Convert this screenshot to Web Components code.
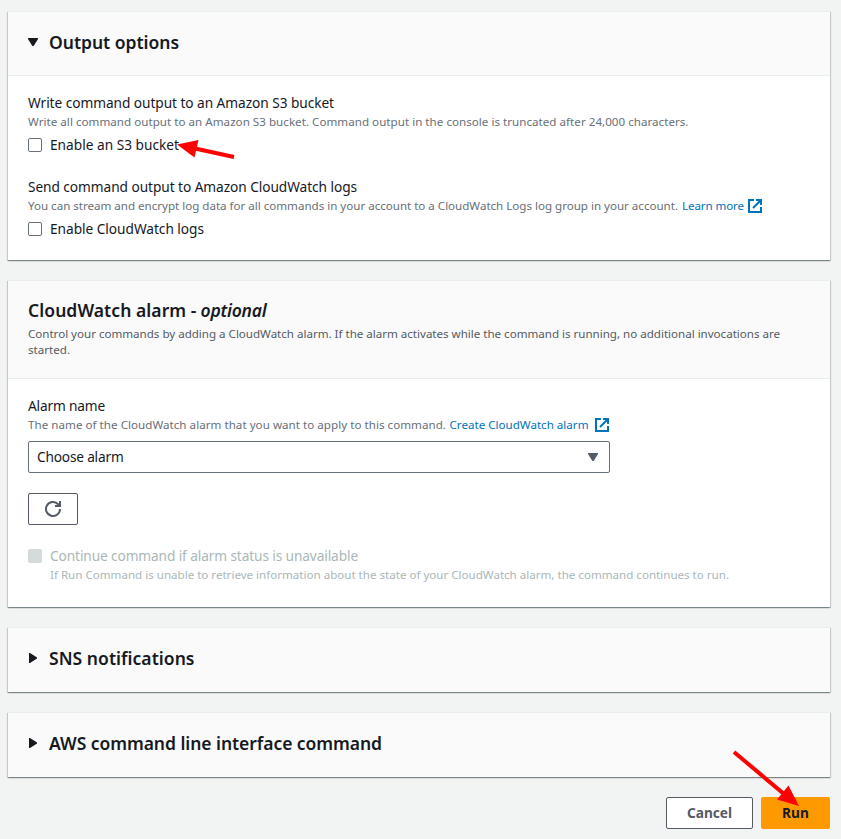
<!DOCTYPE html>
<html lang="en">
<head>
<meta charset="utf-8">
<title>Run command</title>
<style>
  html, body { margin: 0; background: #f2f3f3; }
  body { height: 839px; overflow: hidden; color: #16191f; font: 13.7px/22px "Noto Sans", "Open Sans", sans-serif; }
</style>
</head>
<body>
<run-command-page></run-command-page>
<script>
const define = (name, html, setup) => {
  const template = document.createElement('template');
  template.innerHTML = html;
  customElements.define(name, class extends HTMLElement {
    connectedCallback() {
      if (this.shadowRoot) return;
      this.attachShadow({ mode: 'open' }).append(template.content.cloneNode(true));
      if (setup) setup(this, this.shadowRoot);
    }
  });
};

// Text run tracked so that it takes the width given in its "w" attribute.
define('fit-text', `
  <style>:host { display: inline-block; white-space: nowrap; }</style><slot></slot>`,
  host => {
    const target = +host.getAttribute('w');
    const natural = host.getBoundingClientRect().width;
    host.style.letterSpacing = ((target - natural) / host.textContent.length).toFixed(4) + 'px';
  });

define('ui-caret', `
  <style>
    :host { display: block; width: 10px; height: 10px; }
    svg { display: block; fill: currentColor; }
    :host([right]) .down, :host(:not([right])) .right { display: none; }
  </style>
  <svg class="down" width="10" height="10"><path d="M0 1h10v1L5.6 9H4.4L0 2z"/></svg>
  <svg class="right" width="10" height="10"><path d="M1 0h1l7 4.4v1.2L2 10H1z"/></svg>`);

define('ui-external', `
  <style>:host { display: block; width: 14px; height: 14px; color: #0073bb; } svg { display: block; }</style>
  <svg width="14" height="14" fill="none" stroke="currentColor" stroke-width="2">
    <path d="M6 1H1v12h12V8M8 1h5v5M13 1L5 9"/></svg>`);

define('ui-panel', `
  <style>
    :host { display: block; background: #fff; box-sizing: border-box;
      box-shadow: 0 1px 1px 0 rgba(0,28,36,.3), 1px 1px 1px 0 rgba(0,28,36,.15), -1px 1px 1px 0 rgba(0,28,36,.15); }
    header { background: #fafafa; border-top: 1px solid #eaeded; border-bottom: 1px solid #eaeded; padding: 18px 20px 20px; }
    :host([closed]) header { border-bottom: 0; }
    :host([expandable]) header { padding: 0 20px 4px; height: 59px; display: flex; align-items: center; }
    :host([closed]) header { height: 60px; }
    .title { display: flex; align-items: center; gap: 11px; font-size: 17.5px; font-weight: 600; line-height: 22px; }
    ui-caret { display: none; }
    :host([expandable]) ui-caret { display: block; }
    .body { padding: 16px 20px 20px; }
    :host([closed]) .body { display: none; }
    :host([roomy]) .body { padding-bottom: 24px; }
  </style>
  <header><div class="title"><ui-caret></ui-caret><slot name="title"></slot></div><slot name="description"></slot></header>
  <div class="body"><slot></slot></div>`,
  (host, root) => { if (host.hasAttribute('closed')) root.querySelector('ui-caret').setAttribute('right', ''); });

define('ui-field', `
  <style>
    :host { display: block; }
    .label { height: 22px; }
    .hint { display: flex; align-items: center; height: 16px; font-size: 11.6px; line-height: 16px; color: #687078; }
    .control { padding-top: var(--control-gap, 4px); }
  </style>
  <div class="label"><slot name="label"></slot></div>
  <div class="hint"><slot name="hint"></slot></div>
  <div class="control"><slot></slot></div>`);

define('ui-checkbox', `
  <style>
    :host { display: grid; grid-template-columns: 14px 1fr; column-gap: 8px; align-items: center; }
    .box { width: 14px; height: 14px; box-sizing: border-box; border: 1px solid #687078; border-radius: 2px; background: #fff; }
    .text { height: 22px; }
    .note { grid-column: 2; font-size: 11.6px; line-height: 16px; }
    .note ::slotted(*) { vertical-align: top; }
    :host([disabled]) { color: #aab7b8; }
    :host([disabled]) .box { background: #d5dbdb; border-color: #d5dbdb; }
  </style>
  <span class="box"></span><span class="text"><slot></slot></span><span class="note"><slot name="note"></slot></span>`);

define('ui-select', `
  <style>
    :host { display: flex; align-items: center; justify-content: space-between; box-sizing: border-box;
      width: 582px; height: 32px; padding: 0 11px 0 8px; border: 1px solid #687078; border-radius: 2px; background: #fff; }
    ui-caret { color: #545b64; }
  </style>
  <slot></slot><ui-caret></ui-caret>`);

define('ui-button', `
  <style>
    :host { display: flex; align-items: center; justify-content: center; box-sizing: border-box; height: 32px;
      border: 1px solid #545b64; border-radius: 2px; background: #fff; color: #545b64; font-weight: 700; }
    :host([primary]) { background: #ff9900; border-color: #ff9900; color: #16191f; }
  </style>
  <slot></slot>`);

define('ui-refresh', `
  <style>:host { display: block; } svg { display: block; }</style>
  <svg width="16" height="16" fill="none" stroke="#545b64" stroke-width="2">
    <path d="M15 8A7 7 0 1 1 12.9 3L15 5.2M15 0v5H10"/></svg>`);

define('pointer-arrow', `
  <style>:host { position: absolute; } svg { display: block; overflow: visible; fill: red; stroke: red; }</style>
  <svg width="1" height="1"><line stroke-width="4"></line><polygon stroke="none"></polygon></svg>`,
  (host, root) => {
    const [x1, y1, x2, y2] = host.getAttribute('line').split(' ');
    const line = root.querySelector('line');
    Object.entries({ x1, y1, x2, y2 }).forEach(([k, v]) => line.setAttribute(k, v));
    root.querySelector('polygon').setAttribute('points', host.getAttribute('head'));
  });

define('run-command-page', `
  <style>
    :host { display: flex; flex-direction: column; gap: 20px; padding: 11px 11px 0 8px; position: relative; }
    .stack { display: flex; flex-direction: column; gap: 20px; }
    .description { font-size: 11.6px; line-height: 16px; color: #545b64; padding-top: 5px; display: flex; flex-direction: column; align-items: flex-start; }
    a { color: #0073bb; margin-left: 4px; display: flex; }
    .alarm { --control-gap: 8px; }
    .alarm a { margin-left: 3.5px; }
    .refresh { width: 50px; }
    .actions { display: flex; justify-content: flex-end; gap: 8px; }
    .cancel { width: 87px; } .run { width: 69px; }
    em { font-style: italic; margin-left: -7px; }
    pointer-arrow { left: 0; top: 0; }
  </style>
  <ui-panel expandable>
    <fit-text slot="title" w="130">Output options</fit-text>
    <div class="stack">
      <ui-field>
        <fit-text slot="label" w="306">Write command output to an Amazon S3 bucket</fit-text>
        <fit-text slot="hint" w="660.5">Write all command output to an Amazon S3 bucket. Command output in the console is truncated after 24,000 characters.</fit-text>
        <ui-checkbox><fit-text w="129">Enable an S3 bucket</fit-text></ui-checkbox>
      </ui-field>
      <ui-field>
        <fit-text slot="label" w="329">Send command output to Amazon CloudWatch logs</fit-text>
        <fit-text slot="hint" w="650">You can stream and encrypt log data for all commands in your account to a CloudWatch Logs log group in your account.</fit-text>
        <a slot="hint"><fit-text w="62">Learn more</fit-text></a>
        <ui-external slot="hint" style="margin-left:4px"></ui-external>
        <ui-checkbox><fit-text w="154">Enable CloudWatch logs</fit-text></ui-checkbox>
      </ui-field>
    </div>
  </ui-panel>
  <ui-panel roomy>
    <fit-text slot="title" w="168.5">CloudWatch alarm -</fit-text>
    <em slot="title"><fit-text w="66">optional</fit-text></em>
    <div slot="description" class="description">
      <fit-text w="752">Control your commands by adding a CloudWatch alarm. If the alarm activates while the command is running, no additional invocations are</fit-text>
      <fit-text w="42">started.</fit-text>
    </div>
    <div class="stack">
      <ui-field class="alarm">
        <fit-text slot="label" w="77">Alarm name</fit-text>
        <fit-text slot="hint" w="418">The name of the CloudWatch alarm that you want to apply to this command.</fit-text>
        <a slot="hint"><fit-text w="139">Create CloudWatch alarm</fit-text></a>
        <ui-external slot="hint" style="margin-left:6.5px"></ui-external>
        <ui-select><fit-text w="86.5">Choose alarm</fit-text></ui-select>
      </ui-field>
      <ui-button class="refresh"><ui-refresh></ui-refresh></ui-button>
      <ui-checkbox disabled>
        <fit-text w="308">Continue command if alarm status is unavailable</fit-text>
        <fit-text slot="note" w="679">If Run Command is unable to retrieve information about the state of your CloudWatch alarm, the command continues to run.</fit-text>
      </ui-checkbox>
    </div>
  </ui-panel>
  <ui-panel expandable closed><fit-text slot="title" w="145.5">SNS notifications</fit-text></ui-panel>
  <ui-panel expandable closed><fit-text slot="title" w="333">AWS command line interface command</fit-text></ui-panel>
  <div class="actions">
    <ui-button class="cancel"><fit-text w="45">Cancel</fit-text></ui-button>
    <ui-button class="run" primary><fit-text w="27">Run</fit-text></ui-button>
  </div>
  <pointer-arrow line="234 157 195 148.5" head="177,144.5 198.5,140 194.5,157.5"></pointer-arrow>
  <pointer-arrow line="734 752 784 794" head="799,806 788.5,785.5 777,799.5"></pointer-arrow>`);
</script>
</body>
</html>
